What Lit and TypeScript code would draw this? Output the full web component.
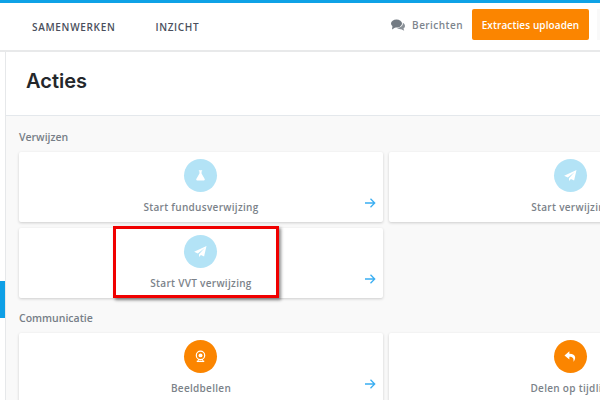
import { LitElement, html, css, svg } from "lit";
import { customElement } from "lit/decorators.js";

const arrow = html`<svg class="arrow" viewBox="0 0 12 12" width="12" height="12"><path d="M1 6h9.500M6.500 1.800 10.700 6l-4.200 4.200" fill="none" stroke="#3aaef2" stroke-width="1.300"/></svg>`;

const icons = {
  flask: svg`<path d="M-2.200-7h4.400v1.300h-.8v3L5.600 4.800A1.200 1.200 0 0 1 4.600 6.500h-9.200a1.200 1.200 0 0 1-1-1.700L-1.400-2.700v-3h-.8z" fill="#fff"/>`,
  plane: svg`<path d="M8-7.500 4.800 6.500.6 4.600-2 7.200V3.600L5.600-4.600-3.600 2.600-8.500.2z" fill="#fff"/>`,
  cam: svg`<g fill="none" stroke="#fff"><circle r="5.600" cy="-1.500" stroke-width="1.600"/><circle r="2.600" cy="-1.500" fill="#fff" stroke="none"/><path d="M-5 6.500H5" stroke-width="1.800"/><path d="M-2.500 3.500-3.500 6.500M2.500 3.500 3.500 6.500" stroke-width="1.300"/></g>`,
  reply: svg`<path d="M-1.500-7-8-1.500l6.500 5.500V.2C3 .2 4.500 2 4 7c3-3.500 4.500-10.500-5.500-10.800z" fill="#fff"/>`,
};

@customElement("app-root")
export class AppRoot extends LitElement {
  static styles = css`
    :host { display: block; position: relative; width: 600px; height: 400px; overflow: hidden; background: #f9f9f9; font-family: "Open Sans", sans-serif; }
    .top { height: 47px; border-top: 3px solid #0ea2e6; background: #fff; border-bottom: 2px solid #e8e9ea; display: flex; align-items: center; box-sizing: content-box; }
    .nav { display: flex; gap: 40px; padding-left: 32px; font-size: 10px; font-weight: 600; letter-spacing: .68px; color: #4a4f5c; }
    .right { margin-left: auto; display: flex; align-items: center; margin-bottom: 4px; }
    .msg { display: flex; align-items: center; gap: 7px; font-size: 10px; font-weight: 600; letter-spacing: .45px; color: #7d858d; margin-right: 9px; }
    .btn { width: 117px; height: 31px; background: #fb8500; border-radius: 2px; color: #fff; font-size: 10px; font-weight: 600; display: flex; align-items: center; justify-content: center; letter-spacing: .1px; }
    .next { width: 3px; height: 31px; margin-left: 8px; background: #f9f9f9; }
    .main { display: flex; height: 348px; }
    .side { width: 5px; flex: none; border-right: 1px solid #e6e8ea; display: flex; flex-direction: column; background: #fff; padding-top: 229px; box-sizing: content-box; }
    .tab { width: 5px; height: 37px; background: #0e9fe6; }
    .content { flex: 1; min-width: 0; }
    .title { height: 64px; background: #fff; border-bottom: 1px solid #e4e8ec; display: flex; align-items: center; padding-left: 20px; padding-bottom: 6px; box-sizing: border-box; font-family: Inter, sans-serif; font-size: 20px; font-weight: 600; color: #24272b; }
    .body { padding: 14px 0 0 13px; }
    .label { font-size: 10.5px; font-weight: 600; color: #767e87; line-height: 14px; }
    .grid { display: grid; grid-template-columns: 364px 364px; gap: 6px; margin: 8px 0 13px; }
    .card { position: relative; height: 70px; background: #fff; border-radius: 2px; box-shadow: 0 1px 3px rgba(0,0,0,.18); display: flex; flex-direction: column; align-items: center; padding-top: 7px; box-sizing: border-box; }
    .circle { width: 33px; height: 33px; margin-right: 1px; border-radius: 50%; display: flex; align-items: center; justify-content: center; }
    .blue { background: #b3e3f6; }
    .orange { background: #fb8500; }
    .name { margin-top: 8px; font-size: 10px; font-weight: 600; letter-spacing: .3px; line-height: 14px; color: #7b8289; white-space: nowrap; }
    .arrow { position: absolute; right: 7.5px; bottom: 13px; }
    .mark { position: absolute; left: 113px; top: 226px; width: 166px; height: 72px; box-sizing: border-box; border: 3px solid #f00000; box-shadow: 2px 2px 3px rgba(0,0,0,.45); }
  `;

  card(name: string, icon: keyof typeof icons, color: string, hasArrow = true) {
    return html`<div class="card">
      <div class="circle ${color}"><svg viewBox="-10 -10 20 20" width="15" height="15">${icons[icon]}</svg></div>
      <div class="name">${name}</div>
      ${hasArrow ? arrow : ""}
    </div>`;
  }

  render() {
    return html`
      <div class="top">
        <div class="nav"><span>SAMENWERKEN</span><span>INZICHT</span></div>
        <div class="right">
          <div class="msg">
            <svg viewBox="0 0 14 12" width="14" height="12"><ellipse cx="5.500" cy="4.500" rx="5.500" ry="4" fill="#737b83"/><path d="M1.500 7 1 10.500 5 8z" fill="#737b83"/><path d="M11.800 3.800C13.400 4.500 14 6 14 7c0 1.200-.7 2-1.500 2.600l.7 2.100-3-1.500c-1.500.2-3.300-.2-4.200-1.400 3.200 0 6.300-1.800 5.800-5z" fill="#8a9198"/></svg>
            <span>Berichten</span>
          </div>
          <div class="btn">Extracties uploaden</div>
          <div class="next"></div>
        </div>
      </div>
      <div class="main">
        <div class="side"><div class="tab"></div></div>
        <div class="content">
          <div class="title">Acties</div>
          <div class="body">
            <div class="label">Verwijzen</div>
            <div class="grid">
              ${this.card("Start fundusverwijzing", "flask", "blue")}
              ${this.card("Start verwijzing", "plane", "blue")}
              ${this.card("Start VVT verwijzing", "plane", "blue")}
            </div>
            <div class="label">Communicatie</div>
            <div class="grid">
              ${this.card("Beeldbellen", "cam", "orange")}
              ${this.card("Delen op tijdlijn", "reply", "orange")}
            </div>
          </div>
        </div>
      </div>
      <div class="mark"></div>
    `;
  }
}
